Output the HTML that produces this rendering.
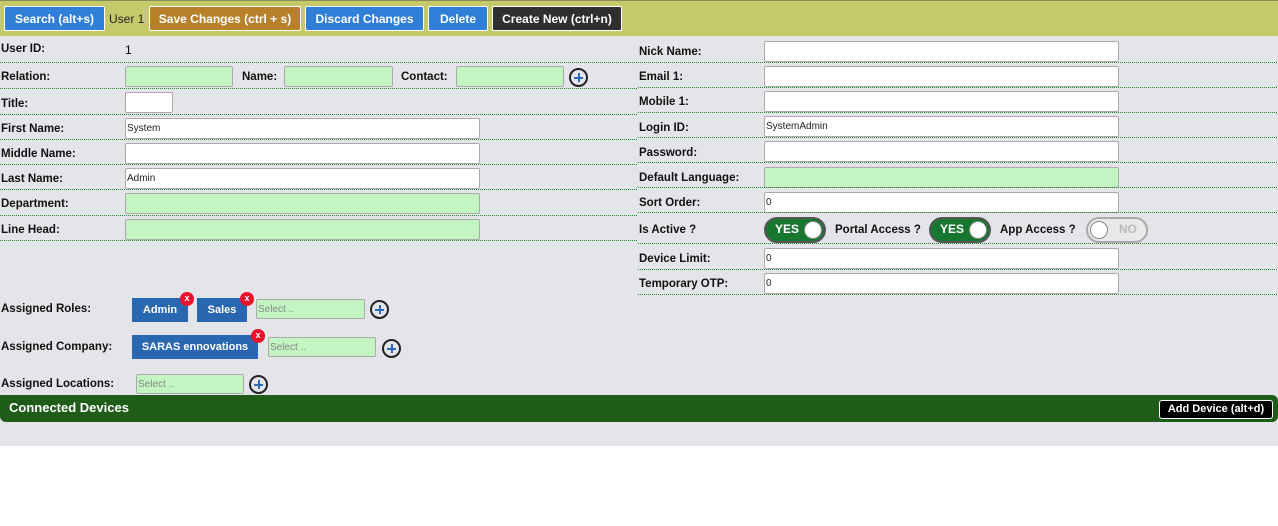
<!DOCTYPE html>
<html><head><style>
*{box-sizing:border-box;margin:0;padding:0}
body{width:1278px;height:526px;background:#fff;font-family:"Liberation Sans",Arial,sans-serif;position:relative;overflow:hidden}
.a{position:absolute}
#bg{left:0;top:0;width:1278px;height:446px;background:#e4e5e9}
#top{left:0;top:0;width:1278px;height:36px;background:#c5c96a;border-top:1px solid #8a8a5a}
.btn{position:absolute;top:6px;height:25px;color:#fff;font-size:12px;font-weight:bold;text-align:center;line-height:24px;border:1px solid #fff;border-radius:2px}
.l{position:absolute;font-size:11.5px;font-weight:bold;color:#111}
.ln{position:absolute;height:1px;background-image:linear-gradient(to right,#1a8a2a 50%,transparent 50%);background-size:2px 1px}
.in{position:absolute;height:21px;background:#fff;border:1px solid #aaa;border-radius:2px;font-size:10px;line-height:20px;padding-left:1px;color:#222}
.g{background:#c2f5c2}
.plus{position:absolute;width:19px;height:19px;border:2px solid #222;border-radius:50%}
.plus:before{content:"";position:absolute;left:3px;top:6.5px;width:9px;height:2px;background:#2a6ab8}
.plus:after{content:"";position:absolute;left:6.5px;top:3px;width:2px;height:9px;background:#2a6ab8}
.tag{position:absolute;height:24px;background:#2a67b1;color:#fff;font-size:11px;font-weight:bold;text-align:center;line-height:24px}
.x{position:absolute;width:14px;height:14px;border-radius:50%;background:#e8132a;color:#fff;font-size:9px;font-weight:bold;text-align:center;line-height:12px}
.tg{position:absolute;height:26px;width:62px;border-radius:13px;border:2px solid #999;font-size:12px;font-weight:bold;line-height:21px}
.tg .k{position:absolute;top:2px;width:18px;height:18px;border-radius:50%;background:#fff;border:1px solid #888}
</style></head><body>
<div id="bg" class="a"></div>
<div id="top" class="a"></div>
<div class="btn" style="left:4px;width:101px;background:#2f7fd6">Search (alt+s)</div>
<div class="a" style="left:109px;top:12px;font-size:12px;color:#222">User 1</div>
<div class="btn" style="left:149px;width:152px;background:#b9802a">Save Changes (ctrl + s)</div>
<div class="btn" style="left:305px;width:119px;background:#2f7fd6">Discard Changes</div>
<div class="btn" style="left:428px;width:60px;background:#2f7fd6">Delete</div>
<div class="btn" style="left:492px;width:130px;background:#2f2f2f">Create New (ctrl+n)</div>

<div class="l" style="left:1px;top:43px">User ID:</div>
<div class="a" style="left:125px;top:43px;font-size:12px">1</div>
<div class="ln" style="left:0;top:62px;width:638px"></div>
<div class="l" style="left:1px;top:71px">Relation:</div>
<div class="in g" style="left:125px;top:66px;width:108px"></div>
<div class="l" style="left:242px;top:71px">Name:</div>
<div class="in g" style="left:284px;top:66px;width:109px"></div>
<div class="l" style="left:401px;top:71px">Contact:</div>
<div class="in g" style="left:456px;top:66px;width:108px"></div>
<div class="plus" style="left:569px;top:68px"></div>
<div class="ln" style="left:0;top:88px;width:638px"></div>
<div class="l" style="left:1px;top:98px">Title:</div>
<div class="in" style="left:125px;top:92px;width:48px"></div>
<div class="ln" style="left:0;top:114px;width:638px"></div>
<div class="l" style="left:1px;top:123px">First Name:</div>
<div class="in" style="left:125px;top:118px;width:355px">System</div>
<div class="ln" style="left:0;top:139px;width:638px"></div>
<div class="l" style="left:1px;top:148px">Middle Name:</div>
<div class="in" style="left:125px;top:143px;width:355px"></div>
<div class="ln" style="left:0;top:164px;width:638px"></div>
<div class="l" style="left:1px;top:173px">Last Name:</div>
<div class="in" style="left:125px;top:168px;width:355px">Admin</div>
<div class="ln" style="left:0;top:189px;width:638px"></div>
<div class="l" style="left:1px;top:198px">Department:</div>
<div class="in g" style="left:125px;top:193px;width:355px"></div>
<div class="ln" style="left:0;top:215px;width:638px"></div>
<div class="l" style="left:1px;top:224px">Line Head:</div>
<div class="in g" style="left:125px;top:219px;width:355px"></div>
<div class="ln" style="left:0;top:240px;width:638px"></div>

<div class="l" style="left:639px;top:46px">Nick Name:</div>
<div class="in" style="left:764px;top:41px;width:355px"></div>
<div class="ln" style="left:638px;top:62px;width:640px"></div>
<div class="l" style="left:639px;top:71px">Email 1:</div>
<div class="in" style="left:764px;top:66px;width:355px"></div>
<div class="ln" style="left:638px;top:87px;width:640px"></div>
<div class="l" style="left:639px;top:96px">Mobile 1:</div>
<div class="in" style="left:764px;top:91px;width:355px"></div>
<div class="ln" style="left:638px;top:112px;width:640px"></div>
<div class="l" style="left:639px;top:122px">Login ID:</div>
<div class="in" style="left:764px;top:116px;width:355px">SystemAdmin</div>
<div class="ln" style="left:638px;top:137px;width:640px"></div>
<div class="l" style="left:639px;top:147px">Password:</div>
<div class="in" style="left:764px;top:141px;width:355px"></div>
<div class="ln" style="left:638px;top:162px;width:640px"></div>
<div class="l" style="left:639px;top:172px">Default Language:</div>
<div class="in g" style="left:764px;top:167px;width:355px"></div>
<div class="ln" style="left:638px;top:187px;width:640px"></div>
<div class="l" style="left:639px;top:197px">Sort Order:</div>
<div class="in" style="left:764px;top:192px;width:355px">0</div>
<div class="ln" style="left:638px;top:212px;width:640px"></div>
<div class="l" style="left:639px;top:224px">Is Active ?</div>
<div class="tg" style="left:764px;top:217px;background:#17772f;color:#fff;border-color:#555"><span style="position:absolute;left:9px">YES</span><div class="k" style="left:38px"></div></div>
<div class="l" style="left:835px;top:224px">Portal Access ?</div>
<div class="tg" style="left:929px;top:217px;background:#17772f;color:#fff;border-color:#555"><span style="position:absolute;left:9px">YES</span><div class="k" style="left:38px"></div></div>
<div class="l" style="left:1000px;top:224px">App Access ?</div>
<div class="tg" style="left:1086px;top:217px;background:#e9e9eb;color:#bbb;border-color:#aaa"><div class="k" style="left:2px"></div><span style="position:absolute;left:31px">NO</span></div>
<div class="ln" style="left:638px;top:243px;width:640px"></div>
<div class="l" style="left:639px;top:253px">Device Limit:</div>
<div class="in" style="left:764px;top:248px;width:355px">0</div>
<div class="ln" style="left:638px;top:269px;width:640px"></div>
<div class="l" style="left:639px;top:278px">Temporary OTP:</div>
<div class="in" style="left:764px;top:273px;width:355px">0</div>
<div class="ln" style="left:638px;top:294px;width:640px"></div>

<div class="l" style="left:1px;top:303px">Assigned Roles:</div>
<div class="tag" style="left:132px;top:298px;width:56px">Admin</div>
<div class="x" style="left:180px;top:292px">x</div>
<div class="tag" style="left:197px;top:298px;width:50px">Sales</div>
<div class="x" style="left:240px;top:292px">x</div>
<div class="in g" style="left:256px;top:299px;width:109px;height:20px;color:#888">Select ..</div>
<div class="plus" style="left:370px;top:300px"></div>
<div class="l" style="left:1px;top:341px">Assigned Company:</div>
<div class="tag" style="left:132px;top:335px;width:126px">SARAS ennovations</div>
<div class="x" style="left:251px;top:329px">x</div>
<div class="in g" style="left:268px;top:337px;width:108px;height:20px;color:#888">Select ..</div>
<div class="plus" style="left:382px;top:339px"></div>
<div class="l" style="left:1px;top:378px">Assigned Locations:</div>
<div class="in g" style="left:136px;top:374px;width:108px;height:20px;color:#888">Select ..</div>
<div class="plus" style="left:249px;top:375px"></div>

<div class="a" style="left:0;top:395px;width:1278px;height:27px;background:#1e5c18;border-radius:0 6px 6px 6px"></div>
<div class="a" style="left:9px;top:400px;color:#fff;font-size:13px;font-weight:bold">Connected Devices</div>
<div class="a" style="left:1159px;top:400px;width:114px;height:19px;background:#000;border:1px solid #fff;border-radius:3px;color:#fff;font-size:11px;font-weight:bold;text-align:center;line-height:17px">Add Device (alt+d)</div>
</body></html>
